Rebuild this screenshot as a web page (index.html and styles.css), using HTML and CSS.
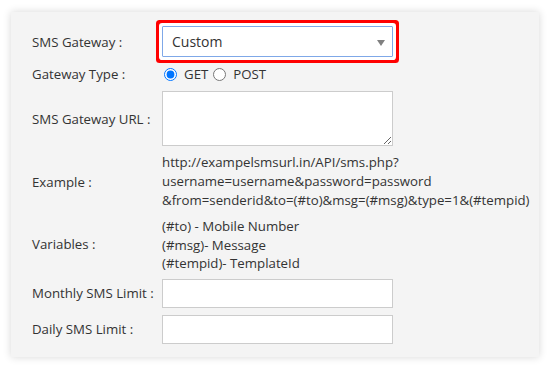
FILE: index.html
```html
<!DOCTYPE html>
<html lang="en">
  <head>
    <meta charset="utf-8" />
    <meta name="viewport" content="width=device-width, initial-scale=1" />
    <title>SMS Gateway Settings</title>
    <link rel="stylesheet" href="styles.css">
  </head>
  <body>
    <div class="panel">
      <form class="sms-form">
        <div class="row">
          <label for="gateway">SMS Gateway :</label>
          <!-- highlighted field -->
          <div class="select-wrap">
            <select id="gateway" name="gateway">
              <option>Custom</option>
            </select>
          </div>
        </div>

        <div class="row">
          <span class="label">Gateway Type :</span>
          <div class="radios">
            <label><input type="radio" name="type" value="get" checked />GET</label>
            <label><input type="radio" name="type" value="post" />POST</label>
          </div>
        </div>

        <div class="row">
          <label for="url">SMS Gateway URL :</label>
          <textarea id="url" name="url"></textarea>
        </div>

        <div class="row">
          <span class="label">Example :</span>
          <div class="info">
            http://exampelsmsurl.in/API/sms.php?<br />
            username=username&amp;password=password<br />
            &amp;from=senderid&amp;to=(#to)&amp;msg=(#msg)&amp;type=1&amp;(#tempid)
          </div>
        </div>

        <div class="row">
          <span class="label">Variables :</span>
          <div class="info vars">
            (#to) - Mobile Number<br />
            (#msg)- Message<br />
            (#tempid)- TemplateId
          </div>
        </div>

        <div class="row">
          <label for="monthly">Monthly SMS Limit :</label>
          <input type="text" id="monthly" name="monthly" />
        </div>

        <div class="row">
          <label for="daily">Daily SMS Limit :</label>
          <input type="text" id="daily" name="daily" />
        </div>
      </form>
    </div>
  </body>
</html>
```

FILE: styles.css
```css
body {
  margin: 0;
  background: #fff;
  font-family: "Open Sans", "DejaVu Sans", sans-serif;
  font-size: 13.25px;
  color: #333;
}

.panel {
  margin: 12px 11px;
  width: 528px;
  box-sizing: border-box;
  padding: 14px 21px 13px;
  background: #f4f4f4;
  box-shadow: 0 0 8px rgba(0, 0, 0, 0.16);
}

.sms-form {
  display: flex;
  flex-direction: column;
  gap: 7px;
}

.row {
  display: grid;
  grid-template-columns: 130px 231px;
  align-items: center;
}

.info {
  line-height: 19px;
  white-space: nowrap;
}

.info.vars {
  line-height: 18.5px;
  margin-bottom: -1px;
}

.select-wrap {
  position: relative;
  height: 31px;
}

/* red annotation frame round the field */
.select-wrap select {
  appearance: none;
  width: 100%;
  height: 31px;
  margin: 0;
  padding: 0 9px;
  font-family: inherit;
  font-size: 14px;
  color: #333;
  background: #fff;
  border: 1px solid #7fa8e8;
  border-radius: 1px;
  box-shadow: 0 0 0 3px #fff, 0 0 0 6px #f00;
  outline: none;
}

.select-wrap::after {
  content: "";
  position: absolute;
  right: 8px;
  top: 14px;
  border-left: 4px solid transparent;
  border-right: 4px solid transparent;
  border-top: 6px solid #808080;
  pointer-events: none;
}

.radios {
  display: flex;
  align-items: center;
  height: 20px;
}

.radios label {
  display: flex;
  align-items: center;
  margin-right: 3px;
}

.radios input {
  width: 13px;
  height: 13px;
  margin: 0 7px 0 2px;
}

textarea {
  width: 231px;
  height: 55px;
  box-sizing: border-box;
  margin: 0;
  background: #fff;
  border: 1px solid #ccc;
  border-radius: 0;
}

input[type='text'] {
  width: 231px;
  height: 29px;
  box-sizing: border-box;
  margin: 0;
  background: #fff;
  border: 1px solid #ccc;
  border-radius: 0;
}
```
